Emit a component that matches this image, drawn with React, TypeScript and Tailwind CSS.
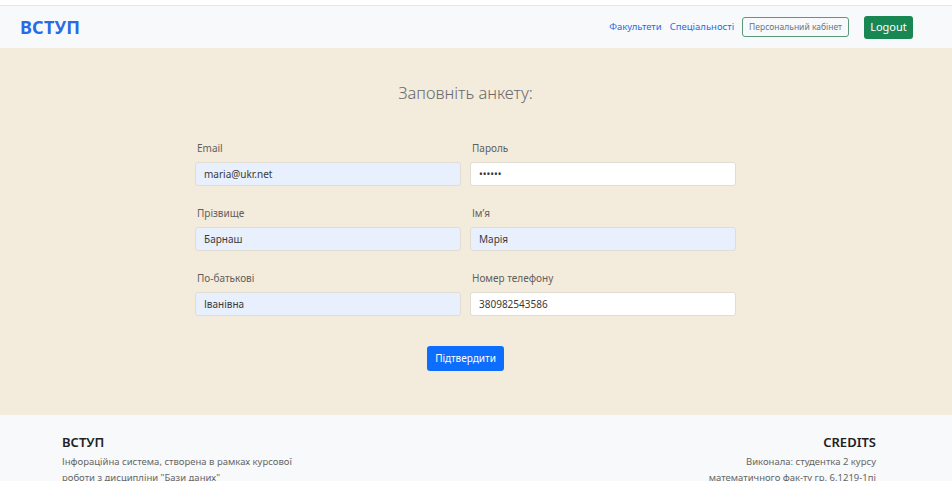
import React from "react";

const font = { fontFamily: '"Noto Sans", "Open Sans", sans-serif' };

function Field({ label, value, filled }: { label: string; value: string; filled?: boolean }) {
  return (
    <div className="flex flex-col">
      <label className="text-[10px] leading-[14px] text-[#5f5f5f] ml-[2px] mb-[7px]">{label}</label>
      <div
        className={`h-[24px] rounded-[3px] border border-[#e2ddd2] flex items-center px-[8px] text-[10px] text-[#3a3a3a] ${
          filled ? "bg-[#e8f0fe]" : "bg-white"
        }`}
      >
        {value}
      </div>
    </div>
  );
}

export default function App() {
  return (
    <div className="w-[952px] h-[481px] overflow-hidden bg-white" style={font}>
      <div className="h-[5px] bg-white" />
      <nav className="h-[43px] bg-[#f8f9fa] border-t border-[#e5e7ea] flex items-center pl-[20px] pr-[39px]">
        <div className="text-[18px] font-bold text-[#2a6ae6] tracking-[0.2px]">ВСТУП</div>
        <div className="flex-1" />
        <div className="flex items-center gap-[8px] text-[9.5px] text-[#2a6ae6] mr-[8px] mt-[1px]">
          <span>Факультети</span>
          <span>Спеціальності</span>
        </div>
        <div className="h-[20px] px-[6px] border border-[#5a9a7a] rounded-[3px] flex items-center text-[8.5px] text-[#6c757d]">
          Персональний кабінет
        </div>
        <div className="ml-[15px] h-[23px] w-[49px] bg-[#198754] rounded-[3px] flex items-center justify-center text-[11px] text-white">
          Logout
        </div>
      </nav>
      <main className="h-[367px] bg-[#f3ebdb] pt-[33px]">
        <div className="w-[541px] ml-[195px]">
          <h1 className="text-center text-[16.5px] font-light text-[#6a6a6a] leading-[24px]">Заповніть анкету:</h1>
          <div className="grid grid-cols-2 gap-x-[9px] gap-y-[20px] mt-[36px]">
            <Field label="Email" value="maria@ukr.net" filled />
            <Field label="Пароль" value="••••••" />
            <Field label="Прізвище" value="Барнаш" filled />
            <Field label="Ім’я" value="Марія" filled />
            <Field label="По-батькові" value="Іванівна" filled />
            <Field label="Номер телефону" value="380982543586" />
          </div>
          <div className="flex justify-center mt-[30px]">
            <div className="h-[25px] px-[8px] bg-[#0d6efd] rounded-[3px] flex items-center text-[10px] text-white">
              Підтвердити
            </div>
          </div>
        </div>
      </main>
      <footer className="h-[66px] bg-[#f8f9fa] flex justify-between pl-[62px] pr-[76px] pt-[18px]">
        <div>
          <div className="text-[13px] font-semibold text-[#222] leading-[18px]">ВСТУП</div>
          <div className="text-[9.5px] text-[#666] leading-[16px] mt-[3px]">
            Інфораційна система, створена в рамках курсової
            <br />
            роботи з дисципліни "Бази даних"
          </div>
        </div>
        <div className="text-right">
          <div className="text-[13px] font-semibold text-[#222] leading-[18px]">CREDITS</div>
          <div className="text-[9.5px] text-[#666] leading-[16px] mt-[3px]">
            Виконала: студентка 2 курсу
            <br />
            математичного фак-ту гр. 6.1219-1пі
          </div>
        </div>
      </footer>
    </div>
  );
}
